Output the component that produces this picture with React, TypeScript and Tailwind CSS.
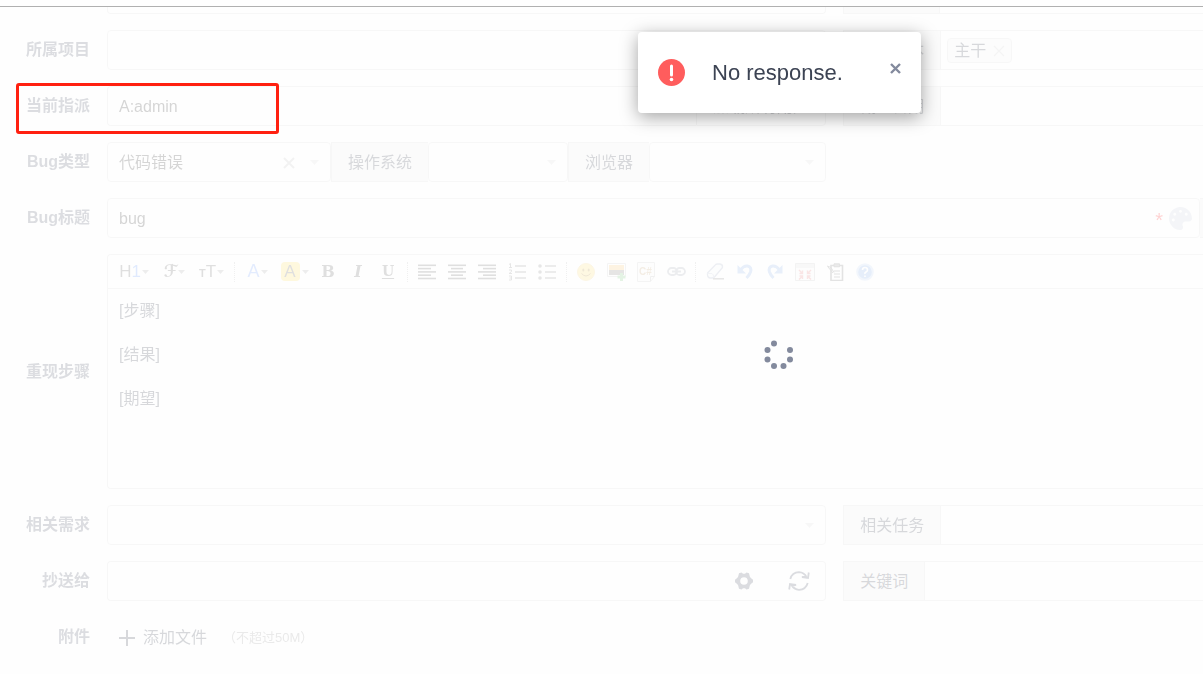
import type { ReactNode } from 'react';
import { FaPalette } from 'react-icons/fa';

const FIELD = 'h-10 min-w-0 border border-[#dcdcdc] bg-white px-[11px] pt-[2px] text-[#333] outline-none';

function Row({ label, htmlFor, children }: { label: string; htmlFor?: string; children: ReactNode }) {
  return (
    <div className="grid grid-cols-[90px_1fr] items-center gap-x-[17px]">
      <label htmlFor={htmlFor} className="text-right font-bold text-[#555c6e]">
        {label}
      </label>
      {children}
    </div>
  );
}

function Columns({ children }: { children: ReactNode }) {
  return <div className="grid grid-cols-[2fr_1fr] gap-x-[17px]">{children}</div>;
}

function Addon({ htmlFor, children }: { htmlFor?: string; children: ReactNode }) {
  return (
    <label
      htmlFor={htmlFor}
      className="flex h-10 flex-none items-center whitespace-nowrap border-y border-l border-[#dcdcdc] bg-[#efefef] px-4 pt-[2px]"
    >
      {children}
    </label>
  );
}

interface PickerProps {
  id: string;
  value?: string;
  clearable?: boolean;
  className?: string;
}

function Picker({ id, value = '', clearable, className = 'flex-1' }: PickerProps) {
  return (
    <div className={`relative min-w-0 ${className}`}>
      <select id={id} defaultValue={value} className={`${FIELD} w-full appearance-none rounded-sm`}>
        <option>{value}</option>
      </select>
      {clearable && (
        <button type="button" aria-label="clear" className="absolute right-[36px] top-[15px]">
          <svg width="12" height="12" viewBox="0 0 12 12" stroke="#c4c4c4" strokeWidth="2">
            <path d="M1 1 11 11M11 1 1 11" />
          </svg>
        </button>
      )}
      <svg className="pointer-events-none absolute right-[12px] top-[18px]" width="9" height="5" fill="#ddd">
        <path d="M0 0h9L4.500 5z" />
      </svg>
    </div>
  );
}

function Tool({ label, children, className = 'w-[30px]' }: { label: string; children: ReactNode; className?: string }) {
  return (
    <button type="button" aria-label={label} className={`flex h-[33px] flex-none items-center justify-center ${className}`}>
      {children}
    </button>
  );
}

function Caret() {
  return (
    <svg className="ml-px flex-none" width="7" height="4" fill="#aaa">
      <path d="M0 0h7L3.500 4z" />
    </svg>
  );
}

function Divider() {
  return <span className="mx-1 h-5 w-px flex-none border-l border-dotted border-[#bbb]" />;
}

// Each entry is [x, width] for the five rules of an alignment icon
function Lines({ rows }: { rows: number[][] }) {
  return (
    <svg width="18" height="16" fill="#666">
      {rows.map(([x, w], i) => (
        <rect key={i} x={x} y={i * 3.3 + 0.5} width={w} height="1.6" />
      ))}
    </svg>
  );
}

function Toolbar() {
  return (
    <div className="flex h-[34px] items-center overflow-hidden border-b border-[#dcdcdc] pl-1 text-[#666]">
      <Tool label="heading" className="w-[44px]">
        <span className="text-[17px]">H<span className="text-[#6b9cff]">1</span></span>
        <Caret />
      </Tool>
      <Tool label="font" className="w-[37px]">
        <span className="font-['DejaVu_Sans'] text-[17px] font-bold">ℱ</span>
        <Caret />
      </Tool>
      <Tool label="size" className="w-[37px]">
        <span className="text-[17px]"><b className="text-[11px]">T</b>T</span>
        <Caret />
      </Tool>
      <Divider />
      <Tool label="color" className="w-[37px]">
        <span className="text-[18px] text-[#7ba4ff]">A</span>
        <Caret />
      </Tool>
      <Tool label="highlight" className="w-[37px]">
        <span className="h-[19px] w-[19px] rounded-sm bg-[#ffdf5e] text-[17px] leading-[19px]">A</span>
        <span className="pl-px"><Caret /></span>
      </Tool>
      <Tool label="bold"><b className="font-['DejaVu_Serif'] text-[16px]">B</b></Tool>
      <Tool label="italic"><b className="font-['DejaVu_Serif'] text-[16px] italic">I</b></Tool>
      <Tool label="underline"><b className="font-['DejaVu_Serif'] text-[14px] underline underline-offset-2">U</b></Tool>
      <Divider />
      <Tool label="left"><Lines rows={[[0, 18], [0, 13], [0, 18], [0, 13], [0, 18]]} /></Tool>
      <Tool label="center"><Lines rows={[[0, 18], [3, 12], [0, 18], [3, 12], [0, 18]]} /></Tool>
      <Tool label="right"><Lines rows={[[0, 18], [5, 13], [0, 18], [5, 13], [0, 18]]} /></Tool>
      <Tool label="ordered list">
        <svg width="18" height="18" fill="none" stroke="#888">
          <path d="M7 3h11M7 9h11M7 15h11" strokeWidth="1.500" />
          <path d="M1 1.500 2.500.5v4M1 4.500h3M1 7h2.500v1.500L1 10.500h3M1 13h2.500v4H1M1.500 15h2" />
        </svg>
      </Tool>
      <Tool label="bullet list">
        <svg width="18" height="18" fill="#888">
          <path d="M7 2.300h11v1.500H7zM7 8.300h11v1.500H7zM7 14.300h11v1.500H7z" />
          <circle cx="2" cy="3" r="1.800" /><circle cx="2" cy="9" r="1.800" /><circle cx="2" cy="15" r="1.800" />
        </svg>
      </Tool>
      <Divider />
      <Tool label="emoticon">
        <svg width="18" height="18" viewBox="0 0 18 18">
          <circle cx="9" cy="9" r="8.500" fill="#ffe173" stroke="#f3d27f" />
          <ellipse cx="6.300" cy="7" rx="1" ry="1.600" fill="#b08a3a" />
          <ellipse cx="11.700" cy="7" rx="1" ry="1.600" fill="#b08a3a" />
          <path d="M4.500 10.500q4.500 5 9 0" fill="none" stroke="#b08a3a" />
        </svg>
      </Tool>
      <Tool label="image">
        <svg width="19" height="18" viewBox="0 0 19 18">
          <path d="M.5.5h18v13H.5z" fill="#fff" stroke="#ccc" />
          <path d="M2 2h15v5H2z" fill="#f9c975" />
          <path d="M2 7h15v5H2z" fill="#87807c" />
          <path d="M14.500 10v8M10.500 14h8" stroke="#7cc77c" strokeWidth="3" />
        </svg>
      </Tool>
      <Tool label="code">
        <svg width="18" height="20" viewBox="0 0 18 20">
          <path d="M.5.5h17v14l-4 5H.5z" fill="#fafafa" stroke="#ccc" />
          <path d="M17.500 14.500h-4v5" fill="none" stroke="#bbb" />
          <text x="2" y="13" fontSize="10" fontWeight="bold" fill="#c8a97c">C#</text>
        </svg>
      </Tool>
      <Tool label="link">
        <svg width="19" height="10" viewBox="0 0 19 10" fill="none" stroke="#a3a9b5" strokeWidth="1.800">
          <rect x="1" y="1" width="9" height="7" rx="3.500" />
          <rect x="9" y="1" width="9" height="7" rx="3.500" />
          <path d="M5 4.500h9" strokeWidth="2" />
        </svg>
      </Tool>
      <Divider />
      <Tool label="clear">
        <svg width="19" height="17" viewBox="0 0 19 17" strokeLinejoin="round">
          <path d="M1.500 10 9 2.200Q10 1 11.500 1H14q3 .5 2.500 3.500L8.500 14q-1 1-2.500 1H4Q1 14.500 1.500 10z" fill="#f6f7fa" stroke="#a8b2c8" strokeWidth="1.300" />
          <path d="M1.500 10.500h4.500q2 1 1.500 4" fill="none" stroke="#c3cada" />
          <path d="M7 15.800h11" stroke="#888" strokeWidth="1.500" />
        </svg>
      </Tool>
      <Tool label="undo">
        <svg width="16" height="17" viewBox="0 0 16 17">
          <path d="M3.500 7q3-4.500 7-4 4.500 1 3 6-1 3-4 6" fill="none" stroke="#8fb4e8" strokeWidth="3" />
          <path d="M.5 2v8.500H9z" fill="#8fb4e8" />
        </svg>
      </Tool>
      <Tool label="redo">
        <svg width="16" height="17" viewBox="0 0 16 17">
          <path d="M12.500 7q-3-4.500-7-4Q1 4 2.500 9q1 3 4 6" fill="none" stroke="#8fb4e8" strokeWidth="3" />
          <path d="M15.500 2v8.500H7z" fill="#8fb4e8" />
        </svg>
      </Tool>
      <Tool label="fullscreen">
        <svg width="20" height="18" viewBox="0 0 20 18">
          <path d="M.5.5h19v17H.5z" fill="#f7f7f7" stroke="#c5c5c5" />
          <path d="M1 1h18v4H1z" fill="#e2e2e2" />
          <path d="m4 7 3.500 3.500M7.500 7.500v3h-3M16 7l-3.500 3.500M12.500 7.500v3h3M4 16.500 7.500 13M4.500 13h3v3M16 16.500 12.500 13M15.500 13h-3v3" fill="none" stroke="#e88080" strokeWidth="1.400" />
        </svg>
      </Tool>
      <Tool label="source">
        <svg width="17" height="18" viewBox="0 0 17 18" fill="none" stroke="#777">
          <path d="M4 2.500h11.500v15H4z" strokeWidth="1.600" />
          <path d="M7 .8h5.500v3H7z" fill="#999" />
          <path d="M7 8h6M7 11h6M7 14h6M0 3l4 1.500 3 5M1 4l5 6" />
        </svg>
      </Tool>
      <Tool label="help">
        <svg width="18" height="18" viewBox="0 0 18 18">
          <circle cx="9" cy="9" r="7.800" fill="#86b0ec" stroke="#c4d7f3" strokeWidth="2" />
          <path d="M6.500 7Q6.500 4.500 9 4.500T11.500 7Q11.500 8.200 10 9T9 11M9 12.500v1.500" fill="none" stroke="#fff" strokeWidth="1.600" />
        </svg>
      </Tool>
    </div>
  );
}

function BugForm() {
  return (
    <form className="flex flex-col gap-4 opacity-20">
      <div className="grid grid-cols-[90px_1fr] gap-x-[17px]">
        <span />
        <Columns>
          <div className="h-[7px] rounded-b-sm border border-t-0 border-[#dcdcdc]" />
          <div className="flex h-[7px] border-b border-l border-[#dcdcdc]">
            <span className="w-24 border-r border-[#dcdcdc] bg-[#efefef]" />
          </div>
        </Columns>
      </div>

      <Row label="所属项目" htmlFor="project">
        <Columns>
          <Picker id="project" />
          <div className="flex">
            <Addon>影响版本</Addon>
            <div className="flex h-10 min-w-0 flex-1 items-center border border-r-0 border-[#dcdcdc] bg-white pl-[6px]">
              <span className="flex h-[25px] items-center gap-[7px] rounded-sm border border-[#ddd] bg-[#f5f5f5] px-[6px] pt-[2px]">
                主干
                <button type="button" aria-label="remove">
                  <svg width="12" height="12" stroke="#ccc" strokeWidth="1.300">
                    <path d="M1 1 11 11M11 1 1 11" />
                  </svg>
                </button>
              </span>
            </div>
          </div>
        </Columns>
      </Row>

      <Row label="当前指派" htmlFor="assignedTo">
        <Columns>
          <div className="flex">
            <input id="assignedTo" defaultValue="A:admin" className={`${FIELD} flex-1 rounded-l-sm border-r-0`} />
            <button type="button" className="h-10 flex-none whitespace-nowrap rounded-r-sm border border-[#dcdcdc] px-4 pt-[2px]">
              加载所有用户
            </button>
          </div>
          <div className="flex">
            <Addon htmlFor="deadline">截止日期</Addon>
            <input id="deadline" className={`${FIELD} flex-1 border-r-0`} />
          </div>
        </Columns>
      </Row>

      <Row label="Bug类型" htmlFor="type">
        <Columns>
          <div className="flex">
            <Picker id="type" value="代码错误" clearable className="w-[224px] flex-none" />
            <Addon htmlFor="os">操作系统</Addon>
            <Picker id="os" className="w-[140px] flex-none" />
            <Addon htmlFor="browser">浏览器</Addon>
            <Picker id="browser" />
          </div>
        </Columns>
      </Row>

      <Row label="Bug标题" htmlFor="title">
        <div className="flex">
          <div className="relative flex-1">
            <input id="title" defaultValue="bug" className={`${FIELD} w-full rounded-sm`} />
            <div className="absolute inset-y-0 right-[8px] flex items-center gap-[6px]">
              <span className="pt-1 text-[20px] text-[#ff2b2b]">*</span>
              <FaPalette size={23} color="#cdd3e0" />
            </div>
          </div>
          <span className="w-[3px] border-y border-[#dcdcdc] bg-[#efefef]" />
        </div>
      </Row>

      <Row label="重现步骤" htmlFor="steps">
        <div className="min-w-0 rounded-l-sm border border-r-0 border-[#dcdcdc] bg-white">
          <Toolbar />
          <textarea
            id="steps"
            defaultValue={'[步骤]\n\n[结果]\n\n[期望]'}
            className="block h-[199px] w-full resize-none px-[11px] py-[11px] leading-[22px] outline-none"
          />
        </div>
      </Row>

      <Row label="相关需求" htmlFor="story">
        <Columns>
          <Picker id="story" />
          <div className="flex">
            <Addon htmlFor="task">相关任务</Addon>
            <input id="task" className={`${FIELD} flex-1 border-r-0`} />
          </div>
        </Columns>
      </Row>

      <Row label="抄送给" htmlFor="mailto">
        <Columns>
          <div className="flex">
            <input id="mailto" className={`${FIELD} flex-1 rounded-l-sm border-r-0`} />
            <button type="button" aria-label="settings" className="flex h-10 w-[56px] items-center justify-center border-y border-[#dcdcdc]">
              <svg width="18" height="18" viewBox="0 0 18 18" fill="#4f566a">
                <path fillRule="evenodd" d="M4 1.200 6.500.5 8 1.800h2L11.500.5l2.500.7.800 3.300 1 1.500L18 7.800v2.400L15.800 12l-1 1.500-.8 3.300-2.500.7-1.500-1.300H8l-1.500 1.300-2.500-.7-.8-3.300-1-1.500L0 10.200V7.800L2.200 6l1-1.500zM9 5.200a3.800 3.800 0 1 0 0 7.600 3.800 3.800 0 0 0 0-7.600z" />
              </svg>
            </button>
            <button type="button" aria-label="refresh" className="flex h-10 w-[54px] items-center justify-center rounded-r-sm border border-l-0 border-[#dcdcdc]">
              <svg width="22" height="20" viewBox="0 0 22 20" fill="none" stroke="#4f566a" strokeWidth="1.800">
                <path d="M2.300 8Q4 1.500 11 1.200q5 .3 7.500 4.800M20.800 1.500 20 7l-6-.8 4.200-1.200M19.700 12Q18 18.500 11 18.800q-5-.3-7.500-4.800M1.200 18.500 2 13l6 .8-4.200 1.200" />
              </svg>
            </button>
          </div>
          <div className="flex">
            <Addon htmlFor="keywords">关键词</Addon>
            <input id="keywords" className={`${FIELD} flex-1 border-r-0`} />
          </div>
        </Columns>
      </Row>

      <Row label="附件">
        <div className="flex h-10 items-center pl-3 pt-[2px]">
          <button type="button" className="flex items-center gap-2">
            <svg width="16" height="16" stroke="#3c4353" strokeWidth="2">
              <path d="M8 0v16M0 8h16" />
            </svg>
            添加文件
          </button>
          <span className="pl-4 text-[13px] text-[#999]">（不超过50M）</span>
        </div>
      </Row>
    </form>
  );
}

function Toast() {
  return (
    <div
      role="alert"
      className="absolute left-[638px] top-8 flex h-[81px] w-[283px] items-center rounded bg-white pl-5 shadow-[0_4px_18px_rgba(0,0,0,0.36)]"
    >
      <svg width="27" height="27" viewBox="0 0 27 27">
        <circle cx="13.500" cy="13.500" r="13.500" fill="#ff5d5d" />
        <path d="M13.500 7v9" stroke="#fff" strokeWidth="3" strokeLinecap="round" />
        <circle cx="13.500" cy="20.500" r="1.800" fill="#fff" />
      </svg>
      <span className="flex-1 pl-[27px] text-[22px]">No response.</span>
      <button type="button" aria-label="close" className="mb-2 mr-5">
        <svg width="11" height="11" stroke="#838a9d" strokeWidth="2.400">
          <path d="M1 1 10 10M10 1 1 10" />
        </svg>
      </button>
    </div>
  );
}

const DOTS = [[10, 3.5], [3.5, 10], [3.5, 19.5], [10, 26], [19.5, 26], [26, 19.5], [26, 10]];

export default function App() {
  return (
    <main className="relative min-h-screen overflow-hidden bg-[#fefefe] pt-[6px] font-['Liberation_Sans','Noto_Sans_CJK_SC',sans-serif] text-base text-[#3c4353]">
      <div className="border-t border-[#b0b0b0]">
        <BugForm />
      </div>
      <div className="pointer-events-none absolute left-4 top-[83px] h-[51px] w-[263px] rounded-[3px] border-3 border-[#ff2010]" />
      <Toast />
      <svg className="absolute left-[764px] top-[340px]" width="30" height="30" fill="#838a9d">
        {DOTS.map(([x, y]) => (
          <circle key={`${x}-${y}`} cx={x} cy={y} r="3" />
        ))}
      </svg>
    </main>
  );
}
